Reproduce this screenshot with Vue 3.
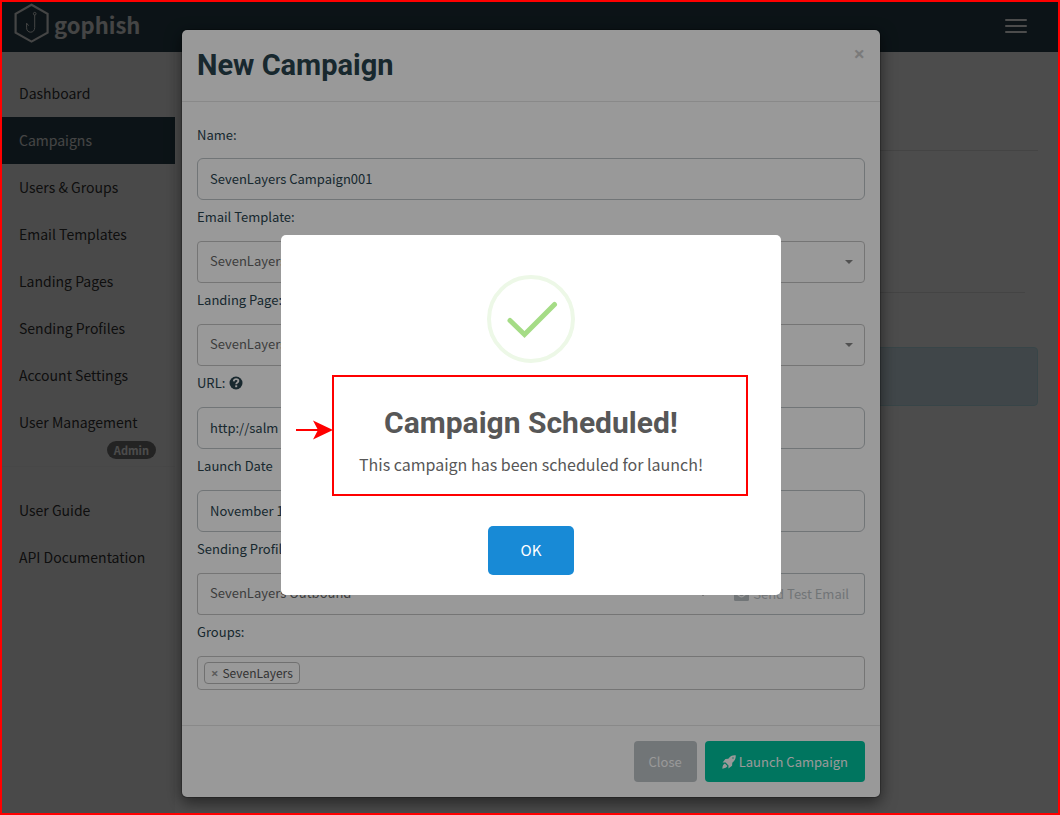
<script setup>
import { ref } from 'vue'

const links = ['Dashboard', 'Campaigns', 'Users & Groups', 'Email Templates', 'Landing Pages', 'Sending Profiles', 'Account Settings']
const active = 'Campaigns'

const name = ref('SevenLayers Campaign001')
const url = ref('http://salm')
const launchDate = ref('November 1')
</script>

<template>
  <div class="app">
    <div class="page">
      <header class="navbar">
        <a class="brand" href="#">
          <svg class="brand-mark" viewBox="0 0 36 40" width="36" height="40" fill="none" stroke="#e6e6e6" aria-hidden="true">
            <path d="M17.5 1.8 33.6 10.9V29.6L17.5 38.6 1.6 29.6V10.9Z" stroke-width="2.2" />
            <circle cx="20.7" cy="10.7" r="1.3" stroke-width="1" />
            <path d="M20.7 12V24.500C20.700 27.400 19 29.200 16.600 29.200S12.600 27.400 12.600 24.800V20.200L14.600 22.600" stroke-width="1" />
          </svg>
          <span>gophish</span>
        </a>
        <button class="menu-toggle" type="button" aria-label="Menu"><i></i><i></i><i></i></button>
      </header>

      <div class="columns">
        <nav class="sidebar">
          <a v-for="link in links" :key="link" href="#" :class="{ active: link === active }">{{ link }}</a>
          <a href="#">User Management</a>
          <span class="badge">Admin</span>
          <hr />
          <a href="#">User Guide</a>
          <a href="#">API Documentation</a>
        </nav>
        <main class="content">
          <hr class="rule" />
          <hr class="rule rule-inner" />
          <div class="notice"></div>
        </main>
      </div>
    </div>

    <div class="backdrop">
      <form class="modal" @submit.prevent>
        <div class="modal-header">
          <h2>New Campaign</h2>
          <button class="close" type="button" aria-label="Close">×</button>
        </div>

        <div class="modal-body">
          <label for="name">Name:</label>
          <input id="name" v-model="name" class="field" type="text" />

          <label for="template">Email Template:</label>
          <div class="select-wrap">
            <select id="template" class="field"><option>SevenLayers</option></select>
          </div>

          <label for="landing">Landing Page:</label>
          <div class="select-wrap">
            <select id="landing" class="field"><option>SevenLayers</option></select>
          </div>

          <label for="url">URL:
            <svg class="help" viewBox="0 0 14 14" width="14" height="14" aria-hidden="true">
              <circle cx="7" cy="7" r="6.5" fill="#29434e" />
              <path d="M4.7 5.4C4.9 3.9 5.8 3.2 7.1 3.2 8.5 3.2 9.4 4 9.4 5.1 9.4 6.6 7.2 6.6 7.2 8.3" fill="none" stroke="#fff" stroke-width="1.8" />
              <rect x="6.2" y="9.3" width="2" height="1.9" fill="#fff" />
            </svg>
          </label>
          <input id="url" v-model="url" class="field" type="text" />

          <label for="date">Launch Date</label>
          <input id="date" v-model="launchDate" class="field" type="text" />

          <label for="profile">Sending Profile:</label>
          <div class="input-group">
            <div class="select-wrap">
              <select id="profile" class="field"><option>SevenLayers Outbound</option></select>
            </div>
            <button class="test-email" type="button" disabled>
              <svg viewBox="0 0 15 13" width="15" height="13" aria-hidden="true">
                <rect width="15" height="13" rx="1.5" fill="#bdc3c7" />
                <path d="M1 4.5 5.8 8.2Q7.5 9.4 9.2 8.2L14 4.5" fill="none" stroke="#fff" stroke-width="1.2" />
              </svg>
              Send Test Email
            </button>
          </div>

          <label for="groups">Groups:</label>
          <div class="tags">
            <span class="tag"><button type="button" aria-label="Remove SevenLayers">×</button>SevenLayers</span>
            <input id="groups" type="text" />
          </div>
        </div>

        <div class="modal-footer">
          <button class="btn btn-default" type="button">Close</button>
          <button class="btn btn-launch" type="submit">
            <svg viewBox="0 0 14 14" width="14" height="14" aria-hidden="true">
              <path fill="#fff" fill-rule="evenodd" d="M13.7.3C10.6 0 8.2 1 6.3 3.7L3.4 3.9.6 7.6 3.6 7.5 6.5 10.4 6.4 13.4 10.1 10.7 10.3 7.7C13 5.8 14 3.4 13.7.3ZM11.7 3A.7.7 0 1 1 10.3 3 .7.7 0 0 1 11.700 3ZM2.900 8.600C1.300 9.200.5 11 .3 13.700 3 13.500 4.800 12.700 5.400 11.100Z" />
            </svg>
            Launch Campaign
          </button>
        </div>
      </form>
    </div>

    <div class="alert-layer">
      <section class="alert" role="alertdialog" aria-labelledby="alert-title" aria-describedby="alert-text">
        <svg class="success" viewBox="0 0 88 88" width="88" height="88" aria-hidden="true">
          <circle cx="44" cy="44" r="42" fill="none" stroke="#edf8e7" stroke-width="4" />
          <path d="M23 45.500 37.500 59.500 67.500 29.500" fill="none" stroke="#a5dc86" stroke-width="5" stroke-linecap="round" />
        </svg>
        <h2 id="alert-title">Campaign Scheduled!</h2>
        <p id="alert-text">This campaign has been scheduled for launch!</p>
        <button class="confirm" type="button">OK</button>
        <div class="callout"></div>
        <svg class="arrow" viewBox="0 0 38 20" width="38" height="20" aria-hidden="true">
          <path d="M0 10H24" stroke="#f00" stroke-width="2" />
          <path d="M17 .5 37 10 17 19.500 22 10Z" fill="#f00" />
        </svg>
      </section>
    </div>
    <div class="frame"></div>
  </div>
</template>

<style>
body {
  margin: 0;
}
</style>

<style scoped>
.app,
.app * {
  box-sizing: border-box;
}

.app {
  position: relative;
  min-height: 100vh;
  overflow: hidden;
  background: #fff;
  color: #29434e;
  font: 13px/22px "Noto Sans CJK SC", sans-serif;
}

button,
input,
select {
  font: inherit;
}

.page {
  display: flex;
  flex-direction: column;
  min-height: 100vh;
  padding-left: 2px;
}

.navbar {
  display: flex;
  align-items: center;
  justify-content: space-between;
  height: 52px;
  padding: 0 33px 0 12px;
  background: #29434e;
}

.brand {
  display: flex;
  align-items: center;
  gap: 4px;
  margin-bottom: 4px;
  color: #e6e6e6;
  font-size: 22px;
  font-weight: 700;
  text-decoration: none;
}

.brand-mark {
  margin-bottom: 2px;
}

.menu-toggle {
  display: flex;
  flex-direction: column;
  gap: 4px;
  width: 22px;
  padding: 0;
  border: 0;
  background: none;
}

.menu-toggle i {
  height: 2px;
  border-radius: 1px;
  background: #fff;
}

.columns {
  display: flex;
  flex: 1;
}

.sidebar {
  display: flex;
  flex-direction: column;
  width: 173px;
  padding-top: 18px;
  background: #f7f7f7;
}

.sidebar a {
  padding: 0 17px;
  color: #333;
  font-size: 14px;
  line-height: 47px;
  text-decoration: none;
}

.sidebar a.active {
  background: #29434e;
  color: #e6e6e6;
}

.badge {
  align-self: flex-end;
  margin: -5px 19px 7px 0;
  padding: 0 7px;
  border-radius: 9px;
  background: #777;
  color: #fff;
  font-size: 11px;
  font-weight: 700;
  line-height: 18px;
}

.sidebar hr {
  width: 100%;
  height: 1px;
  margin: 0 0 20px;
  border: 0;
  background: #eee;
}

.content {
  flex: 1;
  padding: 98px 22px 0 15px;
}

.rule {
  height: 1px;
  margin: 0 0 141px;
  border: 0;
  background: #e5e5e5;
}

.rule-inner {
  margin: 0 13px 54px 0;
}

.notice {
  height: 59px;
  border: 1px solid #bce8f1;
  border-radius: 4px;
  background: #d9edf7;
}

.backdrop,
.alert-layer {
  position: absolute;
  inset: 0;
  display: flex;
  justify-content: center;
  padding-left: 2px;
}

.backdrop {
  align-items: flex-start;
  padding-top: 29px;
  background: rgba(0, 0, 0, 0.5);
}

.modal {
  width: 100%;
  max-width: 700px;
  border: 1px solid rgba(0, 0, 0, 0.2);
  border-radius: 6px;
  background: #fff;
  background-clip: padding-box;
  box-shadow: 0 5px 15px rgba(0, 0, 0, 0.5);
}

.modal-header {
  display: flex;
  align-items: flex-start;
  justify-content: space-between;
  padding: 15px 15px 16px;
  border-bottom: 1px solid #e5e5e5;
}

.modal-header h2 {
  margin: 0;
  font: 700 29px/40px Roboto, sans-serif;
}

.close {
  padding: 0;
  border: 0;
  background: none;
  color: #ccc;
  font: 700 20px/18px "Open Sans", sans-serif;
}

.modal-body {
  padding: 15px 15px 35px;
}

.modal-body label {
  display: flex;
  align-items: center;
  gap: 4px;
  padding: 6px 0 13px;
}

.modal-body label:first-child {
  padding-top: 7px;
  padding-bottom: 12px;
}

.field {
  display: block;
  width: 100%;
  height: 42px;
  padding: 0 12px 1px;
  border: 1px solid #bdc3c7;
  border-radius: 6px;
  background: #fff;
  color: #29434e;
}

.select-wrap {
  position: relative;
  flex: 1;
}

.select-wrap::after {
  content: "";
  position: absolute;
  top: 19px;
  right: 12px;
  border: 4px solid transparent;
  border-top-color: #888;
  border-bottom: 0;
}

select.field {
  appearance: none;
  padding-bottom: 3px;
  border-color: #c4c4c4;
  border-radius: 4px;
  color: #666;
}

.input-group {
  display: flex;
}

.input-group .field {
  border-right: 0;
  border-radius: 4px 0 0 4px;
}

.test-email {
  display: flex;
  align-items: center;
  gap: 4px;
  height: 42px;
  padding: 0 15px;
  border: 1px solid #bdc3c7;
  border-left: 0;
  border-radius: 0 4px 4px 0;
  background: #fff;
  color: #bdc3c7;
}

.tags {
  display: flex;
  align-items: center;
  gap: 5px;
  height: 34px;
  padding: 0 6px;
  border: 1px solid #c4c4c4;
  border-radius: 4px;
}

.tags input {
  flex: 1;
  min-width: 0;
  border: 0;
  outline: 0;
  background: none;
}

.tag {
  display: flex;
  gap: 4px;
  padding: 0 6px;
  border: 1px solid #bbb;
  border-radius: 4px;
  color: #555;
  font-size: 12px;
  line-height: 20px;
}

.tag button {
  padding: 0;
  border: 0;
  background: none;
  color: #999;
  font: 700 13px/20px "Open Sans", sans-serif;
}

.modal-footer {
  display: flex;
  justify-content: flex-end;
  gap: 8px;
  padding: 15px;
  border-top: 1px solid #e5e5e5;
}

.btn {
  display: flex;
  align-items: center;
  gap: 3px;
  height: 41px;
  padding: 0 15px;
  border: 0;
  border-radius: 4px;
  color: #fff;
}

.btn-default {
  background: #bdc3c7;
}

.btn-launch {
  padding: 0 17px;
  background: #00c39f;
}

.alert-layer {
  align-items: center;
  padding-top: 15px;
  background: rgba(0, 0, 0, 0.4);
}

.alert {
  position: relative;
  display: flex;
  flex-direction: column;
  align-items: center;
  width: 500px;
  padding: 40px 20px 20px;
  border-radius: 5px;
  background: #fff;
  color: #575757;
}

.alert h2 {
  margin: 40px 0 9px;
  font: 700 30px/40px Roboto, sans-serif;
}

.alert p {
  margin: 0;
  font-size: 16px;
  line-height: 24px;
}

.confirm {
  width: 86px;
  height: 49px;
  margin-top: 50px;
  padding-bottom: 3px;
  border: 0;
  border-radius: 5px;
  background: #188ad6;
  color: #fff;
  font-size: 15px;
}

.callout {
  position: absolute;
  top: 140px;
  left: 51px;
  width: 416px;
  height: 121px;
  border: 2px solid #f00;
}

.arrow {
  position: absolute;
  top: 185px;
  left: 15px;
}

.frame {
  position: absolute;
  inset: 0;
  border: 2px solid #f00;
  pointer-events: none;
}
</style>
